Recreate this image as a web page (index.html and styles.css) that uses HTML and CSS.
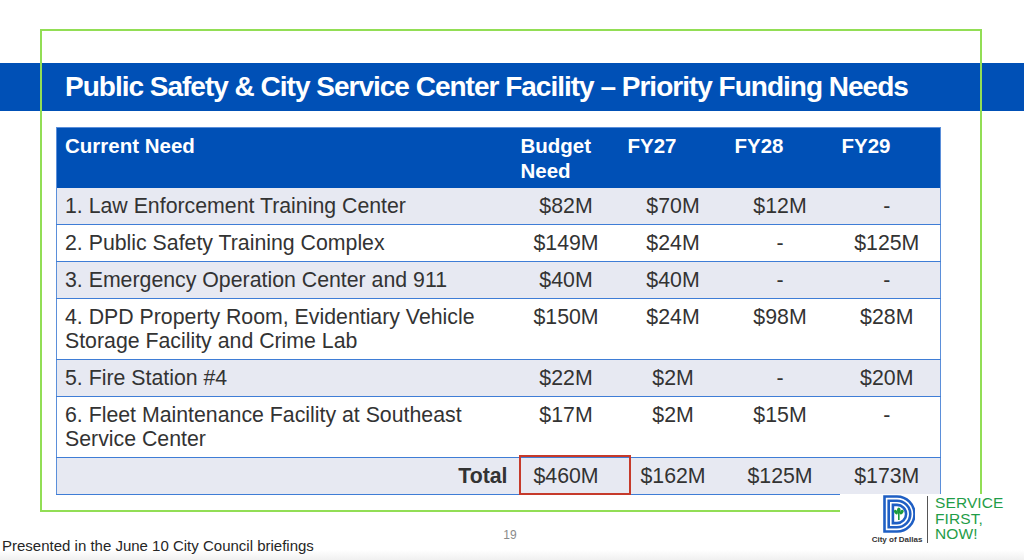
FILE: index.html
```html
<!DOCTYPE html>
<html lang="en">
<head>
<meta charset="utf-8">
<title>Public Safety &amp; City Service Center Facility – Priority Funding Needs</title>
<link rel="stylesheet" href="styles.css">
</head>
<body>
<div class="slide">
  <div class="frame"></div>

  <header class="titlebar">
    <h1 class="title">Public Safety &amp; City Service Center Facility – Priority Funding Needs</h1>
  </header>

  <main class="content">
    <table class="needs">
      <colgroup>
        <col class="c-need">
        <col class="c-num">
        <col class="c-num">
        <col class="c-num">
        <col class="c-num">
      </colgroup>
      <thead>
        <tr>
          <th class="th-need">Current Need</th>
          <th>Budget Need</th>
          <th>FY27</th>
          <th>FY28</th>
          <th>FY29</th>
        </tr>
      </thead>
      <tbody>
        <tr class="shade">
          <td class="need">1. Law Enforcement Training Center</td>
          <td>$82M</td><td>$70M</td><td>$12M</td><td>-</td>
        </tr>
        <tr>
          <td class="need">2. Public Safety Training Complex</td>
          <td>$149M</td><td>$24M</td><td>-</td><td>$125M</td>
        </tr>
        <tr class="shade">
          <td class="need">3. Emergency Operation Center and 911</td>
          <td>$40M</td><td>$40M</td><td>-</td><td>-</td>
        </tr>
        <tr>
          <td class="need">4. DPD Property Room, Evidentiary Vehicle Storage Facility and Crime Lab</td>
          <td>$150M</td><td>$24M</td><td>$98M</td><td>$28M</td>
        </tr>
        <tr class="shade">
          <td class="need">5. Fire Station #4</td>
          <td>$22M</td><td>$2M</td><td>-</td><td>$20M</td>
        </tr>
        <tr>
          <td class="need">6. Fleet Maintenance Facility at Southeast Service Center</td>
          <td>$17M</td><td>$2M</td><td>$15M</td><td>-</td>
        </tr>
        <tr class="shade total">
          <td class="total-label">Total</td>
          <td class="hl">$460M</td><td>$162M</td><td>$125M</td><td>$173M</td>
        </tr>
      </tbody>
    </table>
  </main>

  <footer class="footer">
    <span class="note">Presented in the June 10 City Council briefings</span>
    <span class="pageno">19</span>
    <span class="spacer"></span>
  </footer>

  <div class="brand">
    <div class="brand-logo">
      <svg class="dmark" viewBox="0 0 32 38" width="32" height="38" aria-hidden="true">
        <g fill="none" stroke="#1f5fc4" stroke-width="2.6" stroke-linejoin="miter">
          <path d="M1.5 1.5 H14 A17.5 17.5 0 0 1 14 36.5 H1.5 Z"/>
          <path d="M5.7 5.7 H14 A13.3 13.3 0 0 1 14 32.3 H5.7 Z"/>
          <path d="M9.9 9.9 H14 A9.1 9.1 0 0 1 14 28.1 H9.9 Z"/>
        </g>
        <g fill="#1c9a3e">
          <rect x="15" y="18" width="1.6" height="7"/>
          <ellipse cx="15.8" cy="15.4" rx="1.8" ry="3"/>
          <ellipse cx="12.9" cy="17.2" rx="1.6" ry="2.6" transform="rotate(-35 12.9 17.2)"/>
          <ellipse cx="18.7" cy="17.2" rx="1.6" ry="2.6" transform="rotate(35 18.7 17.2)"/>
        </g>
      </svg>
      <span class="city">City of Dallas</span>
    </div>
    <span class="divider"></span>
    <div class="slogan">
      <span>SERVICE</span>
      <span>FIRST,</span>
      <span>NOW!</span>
    </div>
  </div>
</div>
</body>
</html>
```

FILE: styles.css
```css
* {
  box-sizing: border-box;
}

html, body {
  margin: 0;
  padding: 0;
  background: #ffffff;
}

body {
  font-family: "Liberation Sans", Arial, Helvetica, sans-serif;
  color: #333333;
}

.slide {
  position: relative;
  width: 1024px;
  height: 560px;
  overflow: hidden;
  display: flex;
  flex-direction: column;
  background: #ffffff;
}

/* decorative green frame drawn over the slide */
.frame {
  position: absolute;
  left: 40px;
  top: 29px;
  width: 942px;
  height: 483px;
  border: 2px solid #92de55;
  z-index: 2;
  pointer-events: none;
}

.titlebar {
  margin-top: 63px;
  height: 48px;
  background: #0050b6;
  flex: none;
}

.title {
  margin: 0;
  padding-left: 65px;
  font-size: 28px;
  line-height: 48px;
  font-weight: 700;
  letter-spacing: -1px;
  color: #ffffff;
  white-space: nowrap;
}

.content {
  padding: 16px 0 0 56px;
  flex: none;
}

.needs {
  width: 884px;
  table-layout: fixed;
  border-collapse: collapse;
  border: 1px solid #5b8fda;
  font-size: 21.3px;
  line-height: 24px;
}

.c-need {
  width: 456px;
}

.c-num {
  width: 107px;
}

.needs th {
  background: #0050b6;
  color: #ffffff;
  font-size: 20.5px;
  line-height: 25px;
  font-weight: 700;
  text-align: left;
  vertical-align: top;
  padding: 5px 6px 5px 8px;
  height: 60px;
}

.needs th.th-need {
  padding-left: 8px;
}

.needs td {
  padding: 6px 0 6px 0;
  text-align: center;
  vertical-align: top;
  color: #333333;
  border-bottom: 1px solid #3f7dd6;
}

.needs tr.shade td {
  background: #e7e9f2;
}

.needs td.need {
  text-align: left;
  padding-left: 8px;
  padding-right: 6px;
}

.needs td.total-label {
  text-align: right;
  font-weight: 700;
  padding-right: 5px;
}

.needs td.hl {
  position: relative;
}

.needs td.hl::after {
  content: "";
  position: absolute;
  left: 6px;
  right: -11px;
  top: -3px;
  bottom: -1px;
  border: 2.5px solid #c63a2b;
}

.footer {
  margin-top: auto;
  height: 36px;
  display: grid;
  grid-template-columns: 1fr auto 1fr;
  background: linear-gradient(to bottom, #ffffff 0%, #ffffff 72%, #f0f0f0 100%);
}

.note {
  align-self: end;
  padding: 0 0 6px 2px;
  font-size: 15px;
  line-height: 17px;
  color: #262626;
  white-space: nowrap;
}

.pageno {
  align-self: start;
  margin-top: 4px;
  font-size: 12px;
  line-height: 14px;
  color: #8a8a8a;
  padding-right: 4px;
}

/* logo block sits over the frame corner */
.brand {
  position: absolute;
  left: 840px;
  top: 494px;
  width: 184px;
  height: 56px;
  background: #ffffff;
  z-index: 3;
  display: flex;
  align-items: flex-start;
  padding: 1px 0 0 32px;
}

.brand-logo {
  width: 50px;
  display: flex;
  flex-direction: column;
  align-items: center;
}

.dmark {
  display: block;
  margin-left: 4px;
}

.city {
  margin-top: 2px;
  font-size: 8px;
  line-height: 9px;
  font-weight: 700;
  color: #333333;
  white-space: nowrap;
}

.divider {
  width: 1px;
  height: 47px;
  margin: 1px 0 0 5px;
  background: #555555;
}

.slogan {
  display: flex;
  flex-direction: column;
  margin-left: 7px;
  font-size: 15.5px;
  line-height: 15.5px;
  color: #1f9d48;
  letter-spacing: 0.1px;
}
```
